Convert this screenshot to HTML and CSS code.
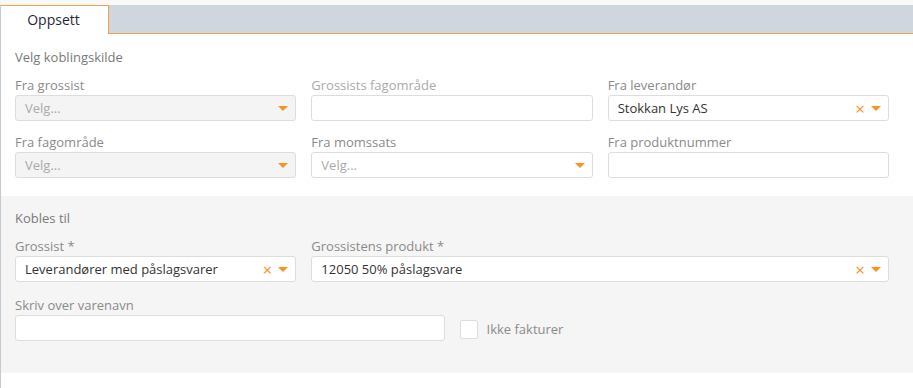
FILE: index.html
```html
<!DOCTYPE html>
<html lang="no">
<head>
    <meta charset="UTF-8">
    <title>Oppsett</title>
    <link rel="stylesheet" href="styles.css">
</head>
<body>
    <div class="page">
        <nav class="tabs">
            <div class="tab active">Oppsett</div>
            <div class="tab-rest"></div>
        </nav>

        <section class="panel">
            <div class="panel-title">Velg koblingskilde</div>
            <div class="grid three">
                <div class="field">
                    <label>Fra grossist</label>
                    <div class="box select disabled">
                        <span class="placeholder">Velg...</span>
                        <span class="caret"></span>
                    </div>
                </div>
                <div class="field">
                    <label class="muted">Grossists fagområde</label>
                    <div class="box"></div>
                </div>
                <div class="field">
                    <label>Fra leverandør</label>
                    <div class="box select">
                        <span class="value">Stokkan Lys AS</span>
                        <span class="clear">&times;</span>
                        <span class="caret"></span>
                    </div>
                </div>
                <div class="field">
                    <label>Fra fagområde</label>
                    <div class="box select disabled">
                        <span class="placeholder">Velg...</span>
                        <span class="caret"></span>
                    </div>
                </div>
                <div class="field">
                    <label>Fra momssats</label>
                    <div class="box select">
                        <span class="placeholder">Velg...</span>
                        <span class="caret"></span>
                    </div>
                </div>
                <div class="field">
                    <label>Fra produktnummer</label>
                    <div class="box"></div>
                </div>
            </div>
        </section>

        <section class="panel gray">
            <div class="panel-title">Kobles til</div>
            <div class="grid three">
                <div class="field">
                    <label>Grossist *</label>
                    <div class="box select">
                        <span class="value">Leverandører med påslagsvarer</span>
                        <span class="clear">&times;</span>
                        <span class="caret"></span>
                    </div>
                </div>
                <div class="field span2">
                    <label>Grossistens produkt *</label>
                    <div class="box select">
                        <span class="value">12050 50% påslagsvare</span>
                        <span class="clear">&times;</span>
                        <span class="caret"></span>
                    </div>
                </div>
            </div>
            <div class="grid two second">
                <div class="field">
                    <label>Skriv over varenavn</label>
                    <div class="box"></div>
                </div>
                <div class="check-row">
                    <span class="checkbox"></span>
                    <span class="check-label">Ikke fakturer</span>
                </div>
            </div>
        </section>
    </div>
</body>
</html>
```

FILE: styles.css
```css
* {
    margin: 0;
    padding: 0;
    box-sizing: border-box;
}

body {
    font-family: "Open Sans", Arial, sans-serif;
    font-size: 13px;
    color: #333;
    background-color: #f9f9f9;
    padding-top: 5px;
}

.page {
    background-color: #fff;
    border-left: 1px solid #c5cad0;
    min-height: 383px;
}

/* Tabs */
.tabs {
    display: flex;
    height: 29px;
}

.tab {
    width: 108px;
    background-color: #fff;
    border-top: 1px solid #f5a04a;
    border-right: 1px solid #f5a04a;
    font-size: 14px;
    color: #1d2a3a;
    text-align: center;
    line-height: 27px;
    padding-right: 2px;
}

.tab-rest {
    flex: 1;
    background-color: #cfd6dd;
    border-bottom: 1px solid #f5a04a;
}

/* Panels */
.panel {
    padding: 14px 24px 18px 14px;
}

.panel.gray {
    background-color: #f5f5f5;
    padding-top: 13px;
    padding-bottom: 32px;
}

.panel-title {
    color: #7a7a7a;
    line-height: 18px;
    margin-bottom: 10px;
}

.grid {
    display: grid;
    column-gap: 15px;
    row-gap: 12px;
}

.grid.three {
    grid-template-columns: repeat(3, 1fr);
}

.grid.two {
    grid-template-columns: repeat(2, 1fr);
}

.grid.second {
    margin-top: 14px;
}

.span2 {
    grid-column: span 2;
}

.field label {
    display: block;
    color: #8a8a8a;
    line-height: 18px;
    margin-bottom: 1px;
}

.field label.muted {
    color: #aaa;
}

.box {
    height: 26px;
    background-color: #fff;
    border: 1px solid #ddd;
    border-radius: 3px;
    display: flex;
    align-items: center;
    padding: 0 7px 0 9px;
}

.box.disabled {
    background-color: #f4f4f4;
}

.placeholder {
    color: #aaa;
    flex: 1;
}

.value {
    color: #333;
    flex: 1;
}

.clear {
    color: #f7931e;
    font-size: 17px;
    line-height: 1;
    margin-right: 6px;
}

.caret {
    width: 0;
    height: 0;
    border-left: 5px solid transparent;
    border-right: 5px solid transparent;
    border-top: 5px solid #f7931e;
}

/* Checkbox */
.check-row {
    display: flex;
    align-items: center;
    padding-top: 21px;
}

.checkbox {
    width: 18px;
    height: 19px;
    background-color: #fff;
    border: 1px solid #ddd;
    border-radius: 2px;
    margin-right: 9px;
}

.check-label {
    color: #8a8a8a;
}
```
